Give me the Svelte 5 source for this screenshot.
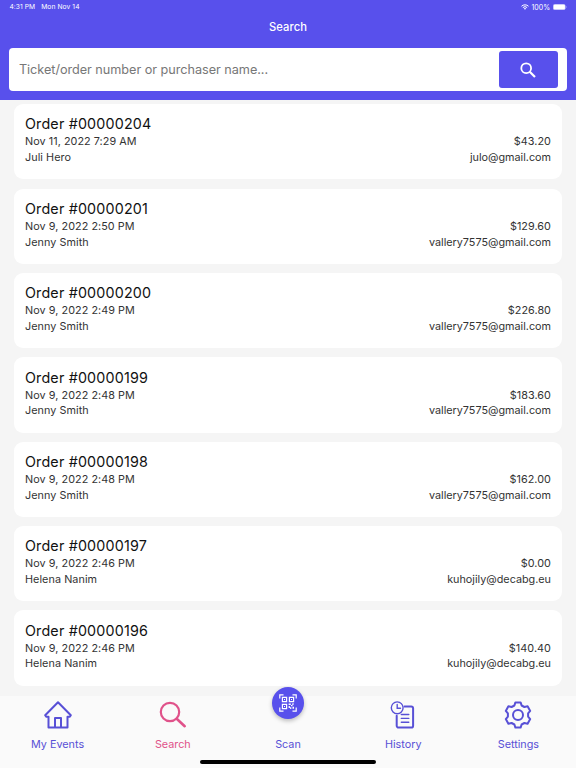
<script lang="ts">
  interface Order {
    id: string;
    date: string;
    name: string;
    amount: string;
    email: string;
  }

  const orders: Order[] = [
    { id: '00000204', date: 'Nov 11, 2022 7:29 AM', name: 'Juli Hero', amount: '$43.20', email: 'julo@gmail.com' },
    { id: '00000201', date: 'Nov 9, 2022 2:50 PM', name: 'Jenny Smith', amount: '$129.60', email: 'vallery7575@gmail.com' },
    { id: '00000200', date: 'Nov 9, 2022 2:49 PM', name: 'Jenny Smith', amount: '$226.80', email: 'vallery7575@gmail.com' },
    { id: '00000199', date: 'Nov 9, 2022 2:48 PM', name: 'Jenny Smith', amount: '$183.60', email: 'vallery7575@gmail.com' },
    { id: '00000198', date: 'Nov 9, 2022 2:48 PM', name: 'Jenny Smith', amount: '$162.00', email: 'vallery7575@gmail.com' },
    { id: '00000197', date: 'Nov 9, 2022 2:46 PM', name: 'Helena Nanim', amount: '$0.00', email: 'kuhojily@decabg.eu' },
    { id: '00000196', date: 'Nov 9, 2022 2:46 PM', name: 'Helena Nanim', amount: '$140.40', email: 'kuhojily@decabg.eu' }
  ];

  const tabs = ['My Events', 'Search', 'Scan', 'History', 'Settings'];

  let active = $state('Search');
  let query = $state('');
</script>

<div class="screen">
  <header>
    <div class="status">
      <span class="clock">4:31 PM</span>
      <span>Mon Nov 14</span>
      <span class="right">
        <svg width="8" height="6" viewBox="0 0 16 12" fill="none" stroke="#fff" stroke-width="2">
          <path d="M1 4.5a10 10 0 0 1 14 0M3.7 7.2a6.2 6.2 0 0 1 8.6 0" />
          <path d="M8 11.5L5.6 9a3.4 3.4 0 0 1 4.8 0z" fill="#fff" stroke="none" />
        </svg>
        <span class="percent">100%</span>
        <svg width="14" height="6" viewBox="0 0 14 6">
          <rect x="0.25" y="0.25" width="12" height="5.5" rx="1.6" fill="#fff" stroke="#b5b1f8" stroke-width="0.5" />
          <path d="M13 2v2c.8-.3.8-1.7 0-2z" fill="#b5b1f8" />
        </svg>
      </span>
    </div>
    <h1>Search</h1>
    <div class="search-box">
      <input bind:value={query} placeholder="Ticket/order number or purchaser name..." />
      <button class="go" aria-label="Search orders">
        <svg width="16" height="16" viewBox="0 0 16 16" fill="none" stroke="#fff" stroke-width="1.8">
          <circle cx="6.2" cy="6.2" r="4.9" />
          <path d="M9.7 9.7L15 15" stroke-width="2.2" />
        </svg>
      </button>
    </div>
  </header>

  <main>
    {#each orders as order (order.id)}
      <div class="card">
        <div class="order-id">Order #{order.id}</div>
        <div class="row">
          <span>{order.date}</span>
          <span>{order.amount}</span>
        </div>
        <div class="row">
          <span>{order.name}</span>
          <span class="email">{order.email}</span>
        </div>
      </div>
    {/each}
  </main>

  <nav>
    {#each tabs as tab (tab)}
      <button class="tab" class:active={active === tab} onclick={() => (active = tab)}>
        <span class="icon" class:scan={tab === 'Scan'}>
          {#if tab === 'My Events'}
            <svg width="28" height="28" viewBox="0 0 28 28" fill="none" stroke="currentColor" stroke-width="2" stroke-linejoin="round">
              <path d="M14 1.3L1.2 14.2l1 1.6h2.3v10.8h19V15.8h2.3l1-1.6z" />
              <path d="M11 26.6V17h6v9.6" />
            </svg>
          {:else if tab === 'Search'}
            <svg width="28" height="28" viewBox="0 0 28 28" fill="none" stroke="currentColor" stroke-width="2.2" stroke-linecap="round">
              <circle cx="11" cy="11" r="9.2" />
              <path d="M17.7 17.7L25.7 25.2" stroke-width="2.6" />
            </svg>
          {:else if tab === 'Scan'}
            <svg width="18" height="18" viewBox="0 0 18 18" fill="none" stroke="#fff" stroke-width="1.2">
              <path d="M.8 4.5V.8h3.7M13.5.8h3.7v3.7M.8 13.5v3.7h3.7M13.5 17.2h3.7v-3.7" />
              <path d="M3.4 3.4h4.2v4.2H3.4zM10.4 3.4h4.2v4.2h-4.2zM3.4 10.4h4.2v4.2H3.4z" />
              <path d="M5 5h1v1H5zM12 5h1v1h-1zM5 12h1v1H5zM9.6 9.6h2.2v1.5H9.6zM13 9.6h2v1h-1.5v1.6H12V11h1zM9.6 12h1.3v1.2h1.4V15h-1.2v-1H9.6zM13.5 12.8H15v2h-1.5z" fill="#fff" stroke="none" />
            </svg>
          {:else if tab === 'History'}
            <svg width="28" height="28" viewBox="0 0 28 28" fill="none" stroke="currentColor" stroke-width="2" stroke-linecap="round">
              <circle cx="8.2" cy="6.8" r="5.9" stroke-width="1.4" />
              <path d="M8.2 3.5v3.7h3.3" stroke-width="1.4" />
              <path d="M15.5 5.4h6.7a1.9 1.9 0 0 1 1.9 1.9v17.4a1.9 1.9 0 0 1-1.9 1.9H9.6a1.9 1.9 0 0 1-1.9-1.9V14.8" />
              <path d="M12.3 13.5h7.5M12.3 17.4h7.5M12.3 21.3h7.5" stroke-width="1.4" />
            </svg>
          {:else}
            <svg width="28" height="28" viewBox="0 0 28 28" fill="none" stroke="currentColor" stroke-width="2" stroke-linejoin="round">
              <path d="M11.4 1.4h5.2l1 3.1 2.8 1.5 3.2-.7 2.6 4.6-2.1 2.5v3.2l2.1 2.5-2.6 4.6-3.2-.7-2.8 1.500-1 3.100h-5.200l-1-3.100-2.800-1.500-3.200.7-2.600-4.600 2.100-2.500v-3.200l-2.100-2.500 2.600-4.600 3.200.7 2.800-1.500z" />
              <circle cx="14" cy="14" r="5" />
            </svg>
          {/if}
        </span>
        <span class="label">{tab}</span>
      </button>
    {/each}
    <div class="home-bar"></div>
  </nav>
</div>

<style>
  :global(body) {
    margin: 0;
  }

  .screen {
    display: flex;
    flex-direction: column;
    height: 768px;
    overflow: hidden;
    background: #f5f5f5;
    font-family: Inter, 'Liberation Sans', sans-serif;
    color: #111;
  }

  header {
    flex: none;
    box-sizing: border-box;
    height: 99.5px;
    padding: 0 9.4px;
    background: #5850ec;
    color: #fff;
  }

  .status {
    display: flex;
    align-items: center;
    height: 14px;
    font-size: 6.7px;
    letter-spacing: 0.08px;
  }

  .clock {
    margin-right: 6px;
  }

  .right {
    display: flex;
    align-items: center;
    gap: 2.3px;
    margin-left: auto;
  }

  .percent {
    font-size: 7px;
  }

  h1 {
    margin: 0;
    height: 34.4px;
    font-size: 11.2px;
    font-weight: 500;
    line-height: 26px;
    text-align: center;
    letter-spacing: 0.1px;
  }

  .search-box {
    display: flex;
    align-items: center;
    box-sizing: border-box;
    height: 42.3px;
    padding-right: 9px;
    background: #fff;
    border-radius: 4px;
  }

  input {
    flex: 1;
    padding: 0 9.5px;
    border: none;
    outline: none;
    background: none;
    font-family: inherit;
    font-size: 12.7px;
    letter-spacing: -0.04px;
  }

  input::placeholder {
    color: #777;
  }

  button {
    padding: 0;
    border: none;
    cursor: pointer;
    font-family: inherit;
  }

  .go {
    display: flex;
    align-items: center;
    justify-content: center;
    width: 59px;
    height: 36.5px;
    background: #5850ec;
    border-radius: 3px;
  }

  main {
    flex: 1;
    min-height: 0;
    overflow: hidden;
    padding: 4.7px 14px 0;
  }

  .card {
    box-sizing: border-box;
    height: 75.3px;
    margin-bottom: 9.05px;
    padding: 11.3px 11px 0;
    background: #fff;
    border-radius: 9px;
  }

  .order-id {
    margin-bottom: 1px;
    font-size: 14.3px;
    line-height: 18px;
    letter-spacing: 0.18px;
  }

  .row {
    display: flex;
    justify-content: space-between;
    font-size: 10.8px;
    line-height: 15.8px;
    letter-spacing: 0.06px;
    color: #333;
  }

  .email {
    letter-spacing: 0;
  }

  nav {
    position: relative;
    flex: none;
    display: flex;
    height: 72.5px;
    background: #fafafa;
  }

  .tab {
    display: flex;
    flex: 1;
    flex-direction: column;
    align-items: center;
    background: none;
    color: #5850d6;
  }

  .tab.active {
    color: #e0528a;
  }

  .icon {
    display: flex;
    align-items: center;
    justify-content: center;
    width: 32px;
    height: 32px;
    margin-top: 3.5px;
  }

  .icon.scan {
    margin-top: -8.5px;
    margin-bottom: 12px;
    border-radius: 50%;
    background: #5850ec;
    box-shadow: 0 2px 4px rgba(0, 0, 0, 0.25);
  }

  .label {
    margin-top: 5.5px;
    font-size: 10.8px;
    line-height: 16px;
  }

  .home-bar {
    position: absolute;
    left: 200px;
    bottom: 4.5px;
    width: 176px;
    height: 3.5px;
    border-radius: 2px;
    background: #000;
  }
</style>
